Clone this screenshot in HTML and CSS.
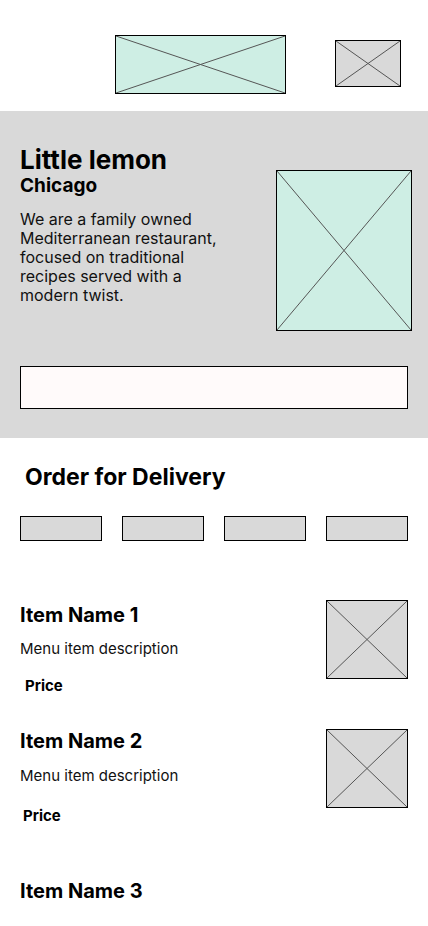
FILE: index.html
```html
<!DOCTYPE html>
<html lang="en">
<head>
  <meta charset="UTF-8">
  <meta name="viewport" content="width=device-width, initial-scale=1.0">
  <title>Little Lemon</title>
  <link rel="stylesheet" href="styles.css">
</head>
<body>
  <header class="top-bar">
    <div class="ph ph-mint logo">
      <svg viewBox="0 0 100 100" preserveAspectRatio="none"><line x1="0" y1="0" x2="100" y2="100"/><line x1="100" y1="0" x2="0" y2="100"/></svg>
    </div>
    <div class="ph ph-gray cart">
      <svg viewBox="0 0 100 100" preserveAspectRatio="none"><line x1="0" y1="0" x2="100" y2="100"/><line x1="100" y1="0" x2="0" y2="100"/></svg>
    </div>
  </header>

  <section class="hero">
    <div class="hero-row">
      <div class="hero-text">
        <h1>Little lemon</h1>
        <h2>Chicago</h2>
        <p>We are a family owned Mediterranean restaurant, focused on traditional recipes served with a modern twist.</p>
      </div>
      <div class="ph ph-mint hero-img">
        <svg viewBox="0 0 100 100" preserveAspectRatio="none"><line x1="0" y1="0" x2="100" y2="100"/><line x1="100" y1="0" x2="0" y2="100"/></svg>
      </div>
    </div>
    <div class="search-box"></div>
  </section>

  <section class="delivery">
    <h3>Order for Delivery</h3>
    <div class="categories">
      <div class="cat"></div>
      <div class="cat"></div>
      <div class="cat"></div>
      <div class="cat"></div>
    </div>

    <div class="menu-item first">
      <div class="item-text">
        <h4>Item Name 1</h4>
        <p class="desc">Menu item description</p>
        <p class="price">Price</p>
      </div>
      <div class="ph ph-gray item-img">
        <svg viewBox="0 0 100 100" preserveAspectRatio="none"><line x1="0" y1="0" x2="100" y2="100"/><line x1="100" y1="0" x2="0" y2="100"/></svg>
      </div>
    </div>

    <div class="menu-item second">
      <div class="item-text">
        <h4>Item Name 2</h4>
        <p class="desc">Menu item description</p>
        <p class="price">Price</p>
      </div>
      <div class="ph ph-gray item-img">
        <svg viewBox="0 0 100 100" preserveAspectRatio="none"><line x1="0" y1="0" x2="100" y2="100"/><line x1="100" y1="0" x2="0" y2="100"/></svg>
      </div>
    </div>

    <div class="menu-item third">
      <div class="item-text">
        <h4>Item Name 3</h4>
      </div>
    </div>
  </section>
</body>
</html>
```

FILE: styles.css
```css
body {
  margin: 0;
  font-family: Inter, "Noto Sans", sans-serif;
  color: #000;
  background: #fff;
}
h1, h2, h3, h4, p {
  margin: 0;
}
.ph {
  box-sizing: border-box;
  border: 1px solid #000;
}
.ph svg {
  display: block;
  width: 100%;
  height: 100%;
}
.ph line {
  stroke: #555;
  stroke-width: 1;
  vector-effect: non-scaling-stroke;
}
.ph-mint {
  background: #ceeee4;
}
.ph-gray {
  background: #d9d9d9;
}
.top-bar {
  display: flex;
  align-items: flex-start;
  height: 111px;
  box-sizing: border-box;
  padding-top: 35px;
}
.logo {
  width: 171px;
  height: 59px;
  margin-left: 115px;
}
.cart {
  width: 66px;
  height: 47px;
  margin-left: 49px;
  margin-top: 5px;
}
.hero {
  background: #d9d9d9;
  padding: 34px 16px 29px 20px;
}
.hero-row {
  display: flex;
  justify-content: space-between;
  align-items: flex-start;
}
.hero-text {
  width: 220px;
}
.hero h1 {
  font-size: 26px;
  line-height: 30px;
  font-weight: 700;
}
.hero h2 {
  font-size: 19px;
  line-height: 22px;
  font-weight: 700;
}
.hero p {
  margin-top: 13px;
  font-size: 16px;
  line-height: 19px;
  color: #111;
}
.hero-img {
  width: 136px;
  height: 161px;
  margin-top: 25px;
}
.search-box {
  box-sizing: border-box;
  width: 388px;
  height: 43px;
  margin-top: 35px;
  border: 1px solid #000;
  background: #fffafa;
}
.delivery {
  padding: 0 20px;
}
.delivery h3 {
  margin-top: 26px;
  margin-left: 5px;
  font-size: 23px;
  line-height: 27px;
  font-weight: 700;
}
.categories {
  display: flex;
  justify-content: space-between;
  margin-top: 25px;
}
.cat {
  box-sizing: border-box;
  width: 82px;
  height: 25px;
  border: 1px solid #000;
  background: #d9d9d9;
}
.menu-item {
  display: flex;
  justify-content: space-between;
  align-items: flex-start;
}
.menu-item.first {
  margin-top: 59px;
}
.menu-item.second {
  margin-top: 34px;
}
.menu-item.third {
  margin-top: 54px;
}
.menu-item h4 {
  font-size: 20px;
  line-height: 24px;
  font-weight: 700;
}
.menu-item.first h4 {
  margin-top: 3px;
}
.desc {
  margin-top: 13px;
  font-size: 15px;
  line-height: 18px;
  color: #111;
}
.second .desc {
  margin-top: 14px;
}
.price {
  margin-top: 19px;
  margin-left: 5px;
  font-size: 15px;
  line-height: 18px;
  font-weight: 700;
}
.second .price {
  margin-top: 22px;
  margin-left: 3px;
}
.item-img {
  width: 82px;
  height: 79px;
}
```
